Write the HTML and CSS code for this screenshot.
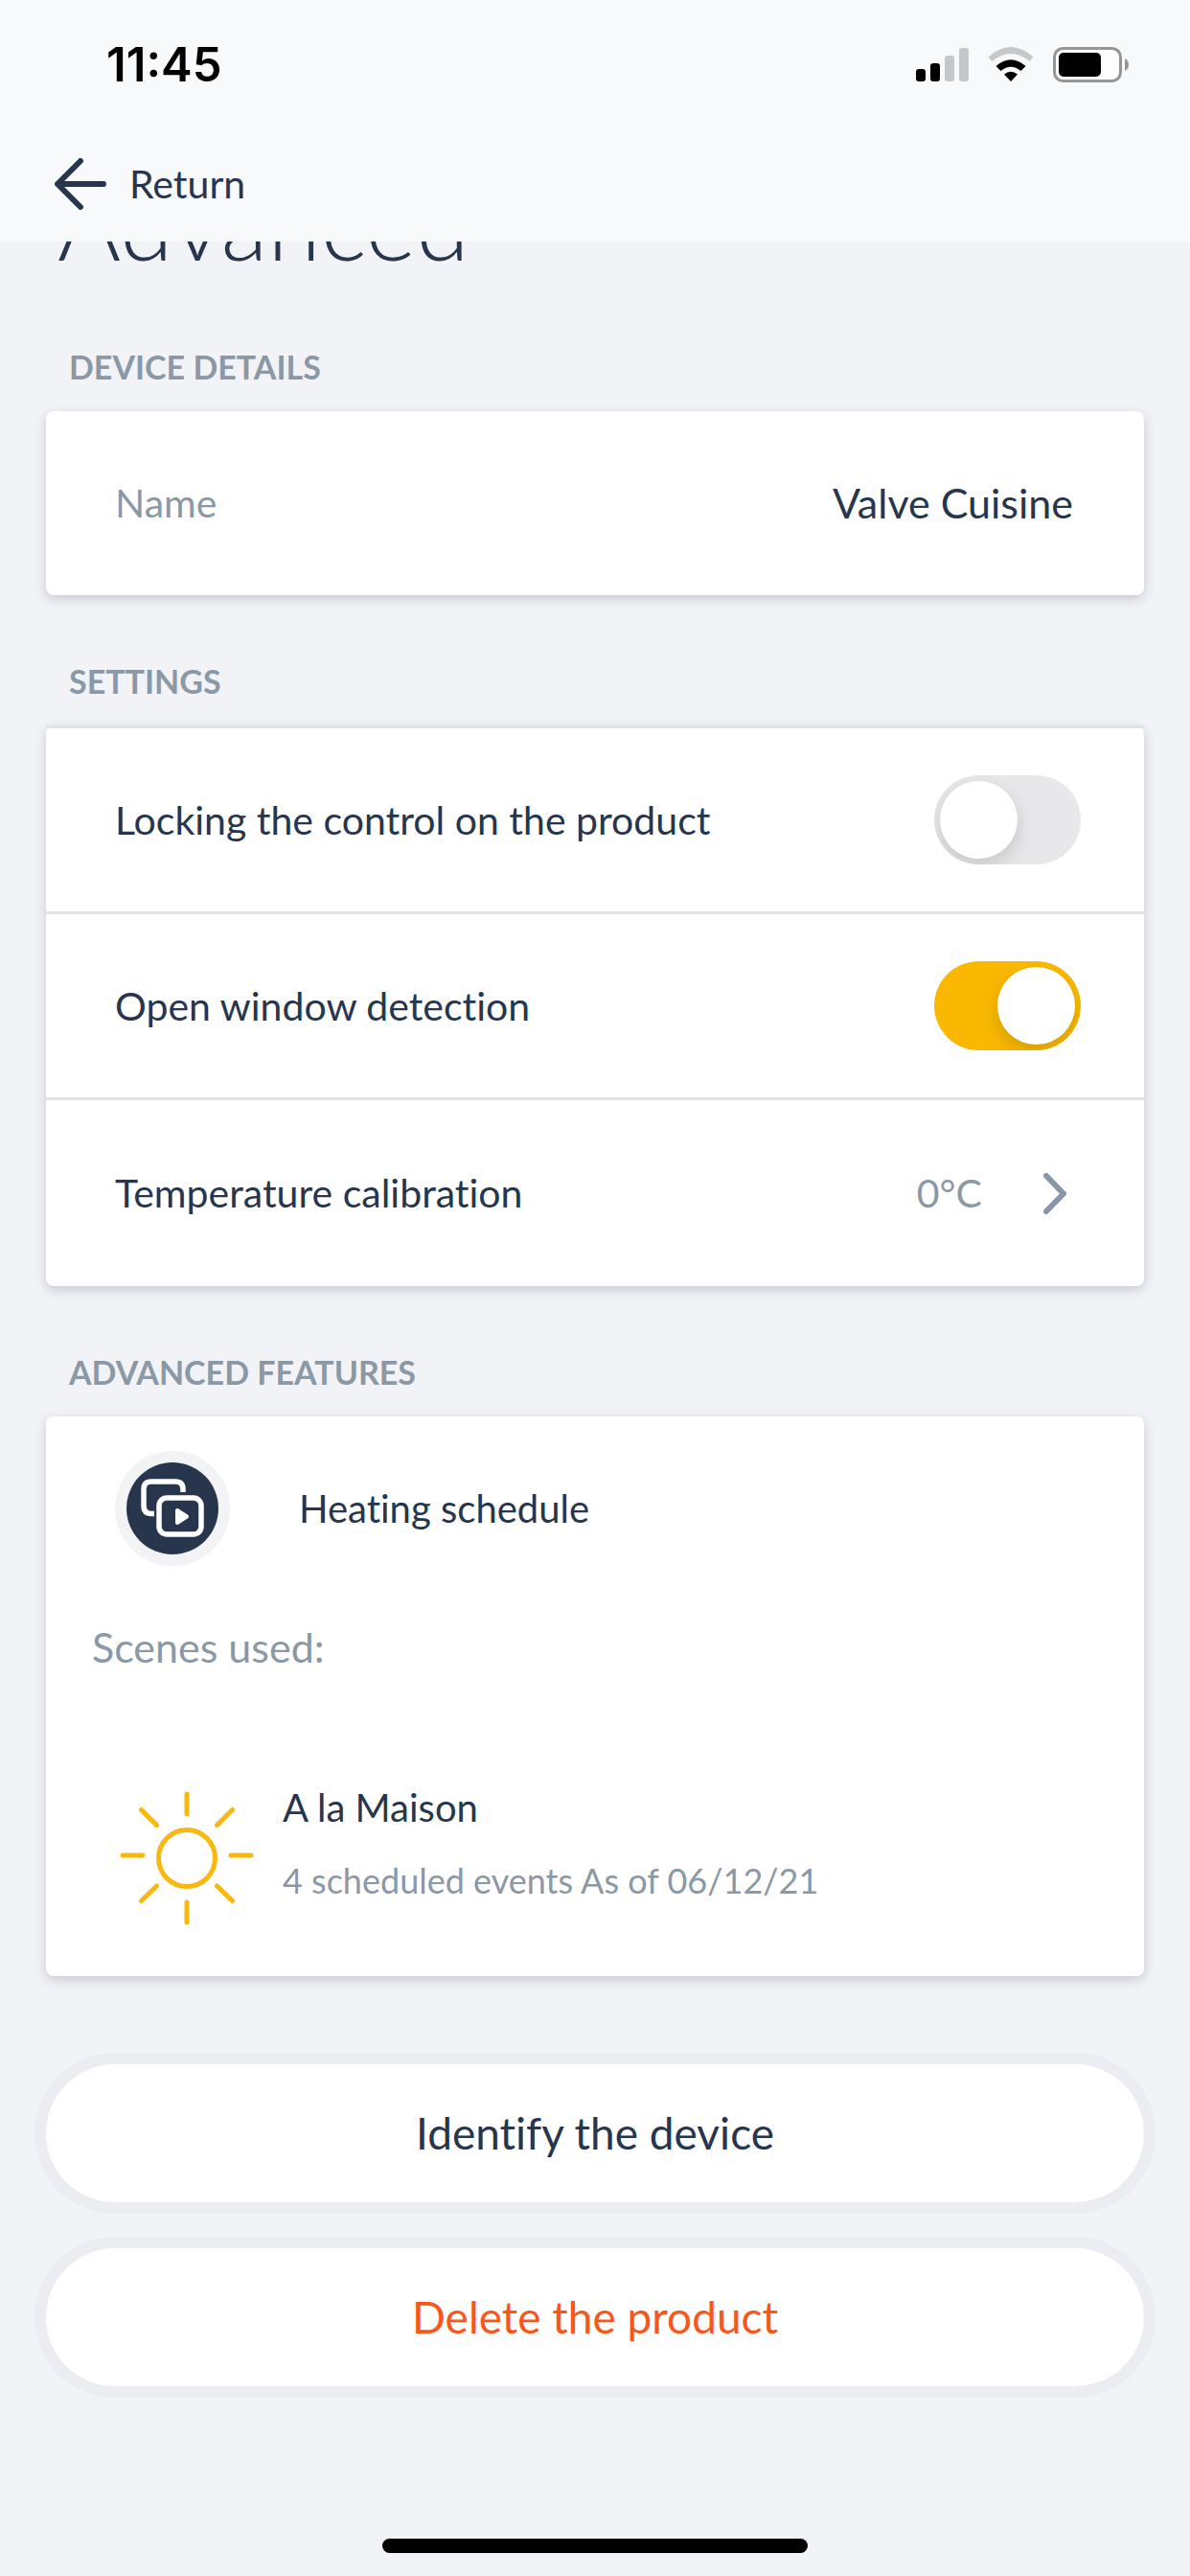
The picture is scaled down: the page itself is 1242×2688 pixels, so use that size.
FILE: index.html
```html
<!DOCTYPE html>
<html lang="en">
<head>
<meta charset="utf-8">
<meta name="viewport" content="width=device-width, initial-scale=1">
<title>Advanced</title>
<link rel="stylesheet" href="styles.css">
</head>
<body>
<div class="screen">
  <header class="topbar">
    <div class="status">
      <time class="clock">11:45</time>
      <div class="status-icons">
        <svg width="55" height="37" viewBox="0 0 55 37" aria-hidden="true">
          <rect x="0" y="23" width="10" height="13" rx="3"/>
          <rect x="15" y="17" width="10" height="19" rx="3"/>
          <rect x="30" y="9" width="10" height="27" rx="3" fill="#c6c7c9"/>
          <rect x="45" y="1" width="10" height="35" rx="3" fill="#c6c7c9"/>
        </svg>
        <svg width="48" height="37" viewBox="0 0 48 37" aria-hidden="true">
          <path d="M0.5 10.5Q24-10.500 47.500 10.500L43.500 15Q24-1 4.500 15Z" fill="#c6c7c9"/>
          <path d="M8.500 20Q24 6.500 39.500 20L34.500 25Q24 16.500 13.500 25Z"/>
          <path d="M17 28.500Q24 23 31 28.500L24 36Z"/>
        </svg>
        <svg width="79" height="37" viewBox="0 0 79 37" aria-hidden="true">
          <rect x="1.500" y="1.500" width="69" height="34" rx="9" fill="#fdfdfe" stroke="#949597" stroke-width="3"/>
          <rect x="6" y="6" width="44" height="25" rx="5"/>
          <path d="M75 12Q79 14 79 18.500T75 25Z" fill="#949597"/>
        </svg>
      </div>
    </div>
    <nav class="nav">
      <a class="back" href="#">
        <svg width="54" height="54" viewBox="0 0 54 54" fill="none" stroke="currentColor" stroke-width="6" stroke-linecap="round" stroke-linejoin="round" aria-hidden="true">
          <path d="M51 27H4M27 3L3 27L27 51"/>
        </svg>
        <span>Return</span>
      </a>
    </nav>
  </header>

  <main class="content">
    <h1 class="title">Advanced</h1>

    <section>
      <h2 class="heading">DEVICE DETAILS</h2>
      <div class="card">
        <div class="row">
          <span class="muted">Name</span>
          <span class="value">Valve Cuisine</span>
        </div>
      </div>
    </section>

    <section>
      <h2 class="heading">SETTINGS</h2>
      <div class="card card-list">
        <div class="row">
          <label for="lock">Locking the control on the product</label>
          <input class="switch" type="checkbox" id="lock">
        </div>
        <div class="row">
          <label for="window">Open window detection</label>
          <input class="switch" type="checkbox" id="window" checked>
        </div>
        <a class="row" href="#">
          <span>Temperature calibration</span>
          <span class="detail">
            <span>0°C</span>
            <svg width="24" height="43" viewBox="0 0 24 43" fill="none" stroke="#8a97a8" stroke-width="6" stroke-linecap="round" stroke-linejoin="round" aria-hidden="true">
              <path d="M3 3L21 21.500L3 40"/>
            </svg>
          </span>
        </a>
      </div>
    </section>

    <section>
      <h2 class="heading">ADVANCED FEATURES</h2>
      <div class="card features">
        <div class="feature">
          <svg width="120" height="120" viewBox="0 0 120 120" aria-hidden="true">
            <circle cx="60" cy="60" r="60" fill="#f2f3f5"/>
            <circle cx="60" cy="60" r="48" fill="#27364d"/>
            <g fill="none" stroke="#fff" stroke-width="5.500">
              <path d="M71 43V40Q71 32 63 32H38Q30 32 30 40V57Q30 65.500 38 65.500H41"/>
              <rect x="46" y="49" width="44" height="38" rx="8"/>
            </g>
            <path d="M65 62L75 68.500L65 75Z" fill="#fff" stroke="#fff" stroke-width="4" stroke-linejoin="round"/>
          </svg>
          <span>Heating schedule</span>
        </div>
        <p class="used">Scenes used:</p>
        <div class="scene">
          <svg width="140" height="154" viewBox="0 0 140 154" fill="none" stroke="#f8b80f" stroke-width="5" stroke-linecap="round" aria-hidden="true">
            <circle cx="70" cy="77" r="29.500"/>
            <path d="M70 10V31M70 123V144M3 74H24M116 74H137M22.500 26.500L38.500 42.500M101.500 42.500L117.500 26.500M22.500 121.500L38.500 106M101.500 106L117.500 121.500"/>
          </svg>
          <div class="scene-text">
            <h3 class="scene-name">A la Maison</h3>
            <p class="scene-info">4 scheduled events As of 06/12/21</p>
          </div>
        </div>
      </div>
    </section>

    <div class="actions">
      <button class="button" type="button">Identify the device</button>
      <button class="button danger" type="button">Delete the product</button>
    </div>
  </main>

  <div class="home-bar"></div>
</div>
</body>
</html>
```
FILE: styles.css
```css
* {
  box-sizing: border-box;
}

body {
  margin: 0;
  background: #f2f3f7;
  color: #27364d;
  font: 400 41px/48px Lato, "Open Sans", sans-serif;
  font-variant-ligatures: none;
}

h1, h2, h3, p {
  margin: 0;
}

a {
  color: inherit;
  text-decoration: none;
}

svg {
  display: block;
  flex: none;
}

.screen {
  display: flex;
  flex-direction: column;
  min-height: 100vh;
}

/* Sticky bar with the clock and the way back */
.topbar {
  position: sticky;
  top: 0;
  z-index: 1;
  padding-bottom: 30px;
  background: #f8f9fb;
}

.status {
  display: flex;
  justify-content: space-between;
  align-items: center;
  height: 135px;
  padding: 0 64px 0 111px;
}

.clock {
  color: #000;
  font: 600 49px/56px Inter, sans-serif;
}

.status-icons {
  display: flex;
  gap: 20px;
}

.nav {
  display: flex;
  padding: 30px 57px 3px;
}

.back {
  display: inline-flex;
  align-items: center;
  gap: 24px;
  height: 54px;
}

.content {
  padding: 0 48px;
}

.title {
  margin-top: -79px;
  padding-left: 12px;
  font-size: 101px;
  font-weight: 300;
  line-height: 120px;
}

.heading {
  margin: 70px 24px 26px;
  color: #8b98a5;
  font-size: 34px;
  font-weight: 700;
  line-height: 40px;
}

.card {
  border-radius: 8px;
  background: #fff;
  box-shadow: 0 4px 12px rgb(39 54 77 / 22%);
}

.row {
  display: flex;
  justify-content: space-between;
  align-items: center;
  min-height: 192px;
  padding: 0 66px 0 72px;
}

.card-list .row {
  min-height: 194px;
  border-top: 3px solid #e0e2e7;
}

.card-list .row:last-child {
  min-height: 197px;
}

.muted {
  color: #8b98a5;
}

.value {
  padding-right: 8px;
  font-size: 43px;
}

.detail {
  display: flex;
  align-items: center;
  gap: 64px;
  padding-right: 15px;
  color: #8b98a5;
}

.switch {
  flex: none;
  width: 153px;
  height: 93px;
  margin: 0;
  padding: 6px;
  appearance: none;
  overflow: hidden;
  border-radius: 47px;
  background: #e8e8ea;
}

.switch::before {
  content: "";
  display: block;
  width: 81px;
  height: 81px;
  border-radius: 50%;
  background: #fff;
  box-shadow: 0 8px 20px rgb(0 0 0 / 15%);
}

.switch:checked {
  background: #fab900;
}

.switch:checked::before {
  margin-left: auto;
}

.features {
  padding: 36px 48px 46px;
}

.feature {
  display: flex;
  align-items: center;
  gap: 72px;
  padding-left: 24px;
  font-size: 40px;
}

.used {
  margin-top: 59px;
  color: #8b98a5;
  font-size: 43px;
  line-height: 52px;
}

.scene {
  display: flex;
  gap: 30px;
  margin-top: 117px;
  padding-left: 29px;
}

.scene-name {
  font-size: 40px;
  font-weight: 400;
  line-height: 48px;
}

.scene-info {
  margin-top: 30px;
  color: #8b98a5;
  font-size: 36px;
  line-height: 44px;
}

.actions {
  display: grid;
  gap: 48px;
  margin-top: 92px;
}

.button {
  height: 144px;
  padding: 0 48px;
  border: 0;
  border-radius: 72px;
  background: #fff;
  box-shadow: 0 0 0 12px #ebedf2;
  color: inherit;
  font: inherit;
  font-size: 46px;
}

.button.danger {
  color: #f8571a;
}

.home-bar {
  width: 444px;
  height: 15px;
  margin: auto auto 24px;
  border-radius: 8px;
  background: #000;
}
```
